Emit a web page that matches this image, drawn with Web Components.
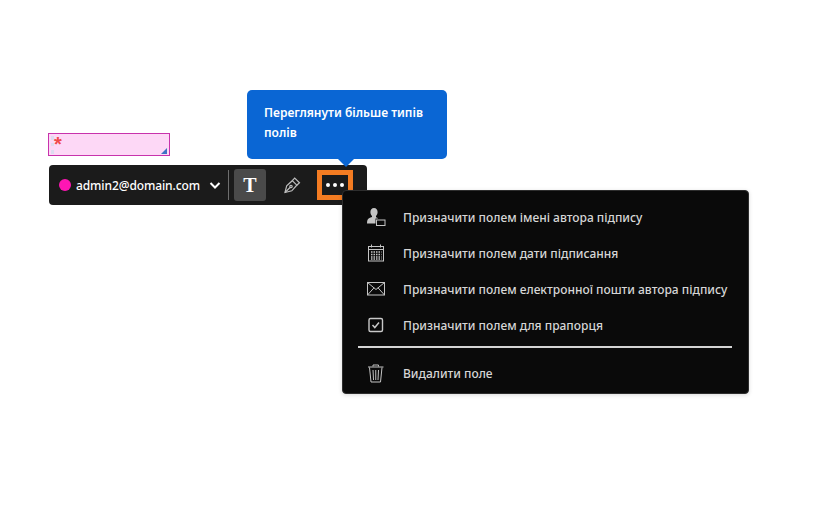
<!DOCTYPE html>
<html lang="uk">
<head>
<meta charset="utf-8">
<title>Поля</title>
<style>
html, body { margin: 0; height: 100%; background: #fff; }
body { font-family: "Noto Sans", "Open Sans", sans-serif; overflow: hidden; }
</style>
</head>
<body>
<form-stage>
  <form-field></form-field>
  <field-toolbar email="admin2@domain.com"></field-toolbar>
  <field-tip>Переглянути більше типів полів</field-tip>
  <field-menu>
    <menu-row icon="person">Призначити полем імені автора підпису</menu-row>
    <menu-row icon="calendar">Призначити полем дати підписання</menu-row>
    <menu-row icon="mail">Призначити полем електронної пошти автора підпису</menu-row>
    <menu-row icon="check">Призначити полем для прапорця</menu-row>
    <hr slot="footer-line">
    <menu-row slot="footer" icon="trash">Видалити поле</menu-row>
  </field-menu>
</form-stage>
<script>
const ICONS = {
  person: `<svg width="20" height="20" viewBox="0 0 20 20"><path fill="#c4c4c4" d="M8 1c2.300 0 3.600 1.800 3.600 4 0 1.700-.7 3.200-1.600 4v1.300c1 .4 1.700.8 2.200 1.200H9.500v5H1c0-3 .6-4.400 2-5.200 1-.5 2-.8 3-1.200V9C5.100 8.200 4.400 6.700 4.400 5 4.400 2.800 5.700 1 8 1z"/><rect x="10.500" y="13" width="8.500" height="5.500" fill="none" stroke="#c4c4c4"/></svg>`,
  calendar: `<svg width="20" height="20" viewBox="0 0 20 20" fill="none" stroke="#c4c4c4"><rect x="2.500" y="3.500" width="15" height="14.500"/><path d="M5.500 1.500v3M14.500 1.500v3M2.500 6.500h15"/><path stroke-width="1.500" stroke-dasharray="1.500 1" d="M5 9h10.500M5 11.500h10.500M5 14h10.500M5 16h10.500"/></svg>`,
  mail: `<svg width="20" height="20" viewBox="0 0 20 20" fill="none" stroke="#c4c4c4"><rect x="1.500" y="3.500" width="17" height="12.500"/><path d="M1.500 3.500l8.500 7 8.500-7M1.500 16l6.500-7.200M18.500 16L12 8.800"/></svg>`,
  check: `<svg width="20" height="20" viewBox="0 0 20 20" fill="none" stroke="#c8c8c8"><rect x="3" y="3.500" width="13.500" height="13" rx="1.500" stroke-width="1.400"/><path d="M6.500 10l2.300 2.500 4.200-5" stroke-width="1.500"/></svg>`,
  trash: `<svg width="20" height="20" viewBox="0 0 20 20" fill="none" stroke="#c4c4c4"><path d="M2 4h15.500M7 3.500V2h5.500v1.500M3.500 4.500L5 19h9.500L16 4.500"/><path d="M7 7l.5 10M9.750 7v10M12.500 7L12 17"/></svg>`
};

class FormStage extends HTMLElement {
  constructor() {
    super();
    this.root = this.attachShadow({mode: 'open'});
    this.root.innerHTML = `
      <style>
        :host { display: block; position: relative; width: 824px; height: 528px; box-sizing: border-box; padding: 133px 0 0 48px; }
      </style>
      <slot></slot>`;
  }
}

class FormField extends HTMLElement {
  constructor() {
    super();
    this.root = this.attachShadow({mode: 'open'});
    this.root.innerHTML = `
      <style>
        :host { display: block; position: relative; width: 122px; height: 23px; box-sizing: border-box; background: #fdd8f6; border: 1px solid #c832ac; }
        .star { font: 700 20px/20px "Liberation Sans", sans-serif; color: #f04a4a; padding-left: 5px; height: 21px; overflow: hidden; }
        .edge { position: absolute; left: 2px; top: 2px; bottom: 1px; border-left: 3px dotted #dcdcf0; }
        .corner { position: absolute; right: 2px; bottom: 1px; width: 0; height: 0; border-left: 6px solid transparent; border-bottom: 6px solid #3f74c4; }
      </style>
      <div class="edge"></div>
      <div class="star">*</div>
      <div class="corner"></div>`;
  }
}

class FieldToolbar extends HTMLElement {
  static get observedAttributes() {
    return ['email'];
  }
  constructor() {
    super();
    this.root = this.attachShadow({mode: 'open'});
    this.root.innerHTML = `
      <style>
        :host { display: flex; align-items: center; width: 318px; height: 40px; margin: 9px 0 0 1px; background: #1b1b1b; border-radius: 4px; color: #fff; position: relative; }
        .dot { width: 12px; height: 12px; border-radius: 50%; background: #ff16b4; margin-left: 10px; flex: none; }
        .mail { font-size: 12px; font-weight: 500; margin-left: 5px; width: 133px; letter-spacing: -.1px; white-space: nowrap; }
        .chev { flex: none; display: block; }
        .sep { width: 1px; height: 30px; background: #6e6e6e; margin-left: 7px; }
        .btn { width: 32px; height: 32px; border-radius: 3px; display: flex; align-items: center; justify-content: center; flex: none; }
        .text { background: #4a4a4a; margin-left: 5px; font: 700 20px "Liberation Serif", serif; }
        .pen { margin-left: 10px; }
        .more { box-sizing: border-box; width: 36px; height: 30px; margin-left: 9px; border: 5px solid #f47c22; border-radius: 0; gap: 3px; }
        .more i { width: 4px; height: 4px; border-radius: 50%; background: #fff; }
      </style>
      <span class="dot"></span>
      <span class="mail"></span>
      <svg class="chev" width="12" height="12" viewBox="0 0 12 12" fill="none" stroke="#fff" stroke-width="2"><path d="M1.500 4l4.500 4.500L10.500 4"/></svg>
      <span class="sep"></span>
      <span class="btn text">T</span>
      <span class="btn pen"><svg width="18" height="18" viewBox="0 0 18 18" fill="none" stroke="#bdbdbd" stroke-width="1.200"><path d="M2 16.500l1.700-6.800 5.600-5 4.500 4.500-5 5.600z"/><path d="M9.300 4.700l2.400-2.700 4.800 4.800-2.700 2.400M2 16.500l5-5"/><circle cx="8" cy="10.500" r="1.200"/></svg></span>
      <span class="btn more"><i></i><i></i><i></i></span>`;
  }
  attributeChangedCallback(attrName, oldVal, newVal) {
    if (attrName === 'email') {
      this.root.querySelector('.mail').textContent = newVal;
    }
  }
}

class FieldTip extends HTMLElement {
  constructor() {
    super();
    this.root = this.attachShadow({mode: 'open'});
    this.root.innerHTML = `
      <style>
        :host { display: block; position: absolute; left: 247px; top: 90px; width: 200px; height: 69px; box-sizing: border-box; padding: 13px 17px; background: #0a66d4; border-radius: 5px; color: #fff; font-size: 12px; font-weight: 600; line-height: 20px; }
        :host::after { content: ""; position: absolute; left: 91px; top: 69px; border: 8px solid transparent; border-bottom: 0; border-top-color: #0a66d4; }
      </style>
      <slot></slot>`;
  }
}

class FieldMenu extends HTMLElement {
  constructor() {
    super();
    this.root = this.attachShadow({mode: 'open'});
    this.root.innerHTML = `
      <style>
        :host { display: block; position: absolute; left: 342px; top: 190px; width: 407px; height: 204px; box-sizing: border-box; padding: 8px 16px 0; background: #0a0a0a; border: 1px solid #2e2e2e; border-radius: 4px; box-shadow: 0 1px 4px rgba(0,0,0,.15); }
        .line { height: 2px; background: #d4d4d4; margin: 3px 0 7px -1px; }
        ::slotted(hr) { display: none; }
      </style>
      <slot></slot>
      <div class="line"></div>
      <slot name="footer"></slot>`;
  }
}

class MenuRow extends HTMLElement {
  constructor() {
    super();
    this.root = this.attachShadow({mode: 'open'});
    this.root.innerHTML = `
      <style>
        :host { display: flex; align-items: center; height: 36px; color: #d6d6d6; font-size: 12px; font-weight: 500; white-space: nowrap; }
        .ic { width: 20px; height: 20px; margin: 0 17px 0 7px; flex: none; }
        svg { display: block; }
      </style>
      <span class="ic"></span><slot></slot>`;
  }
  connectedCallback() {
    this.root.querySelector('.ic').innerHTML = ICONS[this.getAttribute('icon')] || '';
  }
}

customElements.define('form-stage', FormStage);
customElements.define('form-field', FormField);
customElements.define('field-toolbar', FieldToolbar);
customElements.define('field-tip', FieldTip);
customElements.define('field-menu', FieldMenu);
customElements.define('menu-row', MenuRow);
</script>
</body>
</html>
